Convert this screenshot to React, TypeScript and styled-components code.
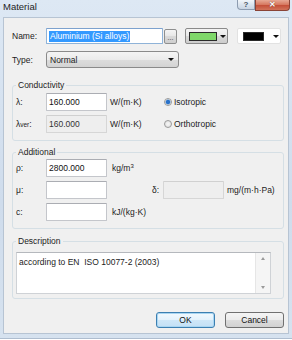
import React from "react";
import styled, { createGlobalStyle } from "styled-components";

const GlobalStyle = createGlobalStyle`
  html, body {
    margin: 0;
    padding: 0;
    background: #ffffff;
  }
  body {
    font-family: "Liberation Sans", Arial, sans-serif;
    font-size: 8.5px;
    color: #1c1c1c;
  }
`;

const Window = styled.div`
  width: 292px;
  height: 339px;
  box-sizing: border-box;
  background: linear-gradient(#dde8f4, #cfdcec 60%, #d6e2ef);
  border-bottom: 1px solid #aebdcf;
  display: flex;
  flex-direction: column;
`;

const TitleBar = styled.div`
  height: 17px;
  display: flex;
  align-items: flex-start;
  padding: 0 2px 0 3px;
`;

const Title = styled.span`
  font-size: 9.5px;
  line-height: 13px;
  color: #1e1e1e;
`;

const CaptionButtons = styled.div`
  margin-left: auto;
  display: flex;
`;

const CaptionButton = styled.div<{ $close?: boolean }>`
  width: ${(p) => (p.$close ? 35 : 18)}px;
  height: ${(p) => (p.$close ? 11 : 10)}px;
  box-sizing: border-box;
  border: 1px solid ${(p) => (p.$close ? "#8a4336" : "#8d9cb0")};
  border-top: none;
  border-radius: ${(p) => (p.$close ? "0 0 4px 0" : "0 0 0 4px")};
  background: ${(p) =>
    p.$close
      ? "linear-gradient(#e7a995, #d77a62 45%, #c5513a 55%, #d1735a)"
      : "linear-gradient(#f2f6fa, #dbe4ee 50%, #c9d5e3)"};
  color: ${(p) => (p.$close ? "#ffffff" : "#4a5566")};
  font-size: 8px;
  font-weight: bold;
  line-height: ${(p) => (p.$close ? 10 : 9)}px;
  text-align: center;
  text-shadow: ${(p) => (p.$close ? "0 0 1px #5a1d12" : "none")};
`;

const Client = styled.div`
  flex: 1;
  margin: 0 3px 4px 3px;
  box-sizing: border-box;
  background: #f0f0f0;
  border: 1px solid #b7c4d3;
  padding: 10px 4px 0 8px;
  display: flex;
  flex-direction: column;
`;

const Row = styled.div<{ $top?: number }>`
  display: flex;
  align-items: center;
  margin-top: ${(p) => p.$top ?? 0}px;
`;

const Label = styled.span<{ $w?: number; $ml?: number }>`
  width: ${(p) => p.$w ?? 34}px;
  margin-left: ${(p) => p.$ml ?? 0}px;
  flex-shrink: 0;
  white-space: nowrap;
`;

const Sub = styled.span`
  font-size: 6.5px;
`;

const Box = styled.div<{ $w: number; $h?: number; $disabled?: boolean; $focus?: boolean }>`
  width: ${(p) => p.$w}px;
  height: ${(p) => p.$h ?? 18}px;
  box-sizing: border-box;
  flex-shrink: 0;
  background: ${(p) => (p.$disabled ? "#eeeeee" : "#ffffff")};
  border: 1px solid ${(p) => (p.$disabled ? "#d6d6d6" : p.$focus ? "#8fb3d8" : "#c4c6cb")};
  border-top-color: ${(p) => (p.$disabled ? "#d0d0d0" : p.$focus ? "#7da2ce" : "#abadb3")};
  border-radius: 1px;
  padding-left: 2px;
  display: flex;
  align-items: center;
  white-space: nowrap;
  color: ${(p) => (p.$disabled ? "#333333" : "#111111")};
`;

const Selected = styled.span`
  background: #3399ff;
  color: #ffffff;
  padding: 0 1px;
  line-height: 11px;
`;

const SmallButton = styled.div`
  width: 13px;
  height: 15px;
  margin-left: 1px;
  box-sizing: border-box;
  border: 1px solid #8e8f8f;
  border-radius: 2px;
  background: linear-gradient(#f4f4f4, #e6e6e6 50%, #d9d9d9 50%, #cfcfcf);
  color: #333;
  font-size: 7px;
  line-height: 15px;
  text-align: center;
`;

const ColorButton = styled.div<{ $flat?: boolean; $ml: number }>`
  width: ${(p) => (p.$flat ? 44 : 43)}px;
  height: 16px;
  margin-left: ${(p) => p.$ml}px;
  box-sizing: border-box;
  border: 1px solid ${(p) => (p.$flat ? "#e2e2e2" : "#8a8a8a")};
  border-radius: 2px;
  background: ${(p) =>
    p.$flat ? "#ffffff" : "linear-gradient(#f3f3f3, #e8e8e8 50%, #d8d8d8 50%, #cdcdcd)"};
  display: flex;
  align-items: center;
  padding-left: ${(p) => (p.$flat ? 5 : 3)}px;
  gap: ${(p) => (p.$flat ? 9 : 3)}px;
`;

const Swatch = styled.div<{ $color: string; $w: number }>`
  width: ${(p) => p.$w}px;
  height: 9px;
  background: ${(p) => p.$color};
  border: 1px solid #2a2a2a;
  box-sizing: border-box;
`;

const Arrow = styled.span`
  width: 0;
  height: 0;
  border-left: 3px solid transparent;
  border-right: 3px solid transparent;
  border-top: 3px solid #111;
`;

const Select = styled.div`
  width: 133px;
  height: 17px;
  box-sizing: border-box;
  border: 1px solid #8a8a8a;
  border-radius: 3px;
  background: linear-gradient(#f4f4f4, #ebebeb 50%, #dddddd 50%, #d3d3d3);
  display: flex;
  align-items: center;
  justify-content: space-between;
  padding: 0 4px 0 3px;
`;

const Group = styled.fieldset<{ $top: number; $pt: number; $pb: number; $pr?: number }>`
  margin: ${(p) => p.$top}px 0 0 0;
  padding: ${(p) => p.$pt}px ${(p) => p.$pr ?? 3}px ${(p) => p.$pb}px 3px;
  border: 1px solid #d5dfe5;
  border-radius: 3px;
  min-width: 0;
`;

const Legend = styled.legend`
  padding: 0 2px;
  line-height: 10px;
  color: #1c1c1c;
`;

const Rows = styled.div`
  display: flex;
  flex-direction: column;
  gap: 4px;
`;

const Unit = styled.span<{ $ml: number; $w?: number }>`
  margin-left: ${(p) => p.$ml}px;
  width: ${(p) => (p.$w ? `${p.$w}px` : "auto")};
  flex-shrink: 0;
  white-space: nowrap;
  sup {
    font-size: 6px;
    vertical-align: 3px;
    line-height: 0;
  }
`;

const Radio = styled.span<{ $checked?: boolean }>`
  display: flex;
  align-items: center;
  gap: 2px;
  &::before {
    content: "";
    width: 8px;
    height: 8px;
    box-sizing: border-box;
    border-radius: 50%;
    border: 1px solid #9a9a9a;
    background: ${(p) =>
      p.$checked
        ? "radial-gradient(circle, #2b72c9 0 1.6px, #6fa6e0 2.3px, #eaeaea 2.8px)"
        : "radial-gradient(circle, #f7f7f7, #dcdcdc)"};
  }
`;

const TextArea = styled.div`
  height: 42px;
  box-sizing: border-box;
  background: #ffffff;
  border: 1px solid #cfd2d6;
  border-top-color: #b5b8bd;
  display: flex;
`;

const TextContent = styled.div`
  flex: 1;
  padding: 4px 0 0 2px;
`;

const ScrollBar = styled.div`
  width: 14px;
  background: #f5f5f5;
  border-left: 1px solid #e6e6e6;
  display: flex;
  flex-direction: column;
  justify-content: space-between;
  align-items: center;
  padding: 4px 0 4px 0;
`;

const ScrollArrow = styled.span<{ $up?: boolean }>`
  width: 0;
  height: 0;
  border-left: 2.5px solid transparent;
  border-right: 2.5px solid transparent;
  ${(p) => (p.$up ? "border-bottom" : "border-top")}: 3px solid #9a9a9a;
`;

const Footer = styled.div`
  margin-top: 13px;
  display: flex;
  justify-content: flex-end;
  gap: 10px;
`;

const DialogButton = styled.div<{ $default?: boolean }>`
  width: 59px;
  height: 16px;
  box-sizing: border-box;
  border: 1px solid ${(p) => (p.$default ? "#3c7fb1" : "#707070")};
  border-radius: 3px;
  background: ${(p) =>
    p.$default
      ? "linear-gradient(#f2f9fe, #e3f2fc 50%, #cfe7f8 50%, #c3e0f5)"
      : "linear-gradient(#f4f4f4, #ebebeb 50%, #dddddd 50%, #d1d1d1)"};
  box-shadow: ${(p) => (p.$default ? "inset 0 0 0 1px #a9d6f2" : "none")};
  text-align: center;
  line-height: 14px;
  color: #111;
`;

export default function App() {
  return (
    <>
      <GlobalStyle />
      <Window>
        <TitleBar>
          <Title>Material</Title>
          <CaptionButtons>
            <CaptionButton>?</CaptionButton>
            <CaptionButton $close>✕</CaptionButton>
          </CaptionButtons>
        </TitleBar>
        <Client>
          <Row>
            <Label>Name:</Label>
            <Box $w={117} $h={16} $focus>
              <Selected>Aluminium (Si alloys)</Selected>
            </Box>
            <SmallButton>...</SmallButton>
            <ColorButton $ml={8}>
              <Swatch $color="#7fd86a" $w={28} />
              <Arrow />
            </ColorButton>
            <ColorButton $ml={9} $flat>
              <Swatch $color="#000000" $w={21} />
              <Arrow />
            </ColorButton>
          </Row>
          <Row $top={7}>
            <Label>Type:</Label>
            <Select>
              <span>Normal</span>
              <Arrow />
            </Select>
          </Row>

          <Group $top={12} $pt={3} $pb={7}>
            <Legend>Conductivity</Legend>
            <Rows>
              <Row>
                <Label $w={30}>λ:</Label>
                <Box $w={61}>160.000</Box>
                <Unit $ml={3} $w={54}>W/(m·K)</Unit>
                <Radio $checked>Isotropic</Radio>
              </Row>
              <Row>
                <Label $w={30}>
                  λ<Sub>ver</Sub>:
                </Label>
                <Box $w={61} $disabled>
                  160.000
                </Box>
                <Unit $ml={3} $w={54}>W/(m·K)</Unit>
                <Radio>Orthotropic</Radio>
              </Row>
            </Rows>
          </Group>

          <Group $top={6} $pt={2} $pb={7}>
            <Legend>Additional</Legend>
            <Rows>
              <Row>
                <Label $w={30}>ρ:</Label>
                <Box $w={61}>2800.000</Box>
                <Unit $ml={5}>
                  kg/m<sup>3</sup>
                </Unit>
              </Row>
              <Row>
                <Label $w={30}>μ:</Label>
                <Box $w={61} />
                <Label $w={11} $ml={45}>
                  δ:
                </Label>
                <Box $w={61} $disabled />
                <Unit $ml={3}>mg/(m·h·Pa)</Unit>
              </Row>
              <Row>
                <Label $w={30}>c:</Label>
                <Box $w={61} />
                <Unit $ml={5}>kJ/(kg·K)</Unit>
              </Row>
            </Rows>
          </Group>

          <Group $top={7} $pt={6} $pb={4} $pr={12}>
            <Legend>Description</Legend>
            <TextArea>
              <TextContent>according to EN&nbsp; ISO 10077-2 (2003)</TextContent>
              <ScrollBar>
                <ScrollArrow $up />
                <ScrollArrow />
              </ScrollBar>
            </TextArea>
          </Group>

          <Footer>
            <DialogButton $default>OK</DialogButton>
            <DialogButton>Cancel</DialogButton>
          </Footer>
        </Client>
      </Window>
    </>
  );
}
